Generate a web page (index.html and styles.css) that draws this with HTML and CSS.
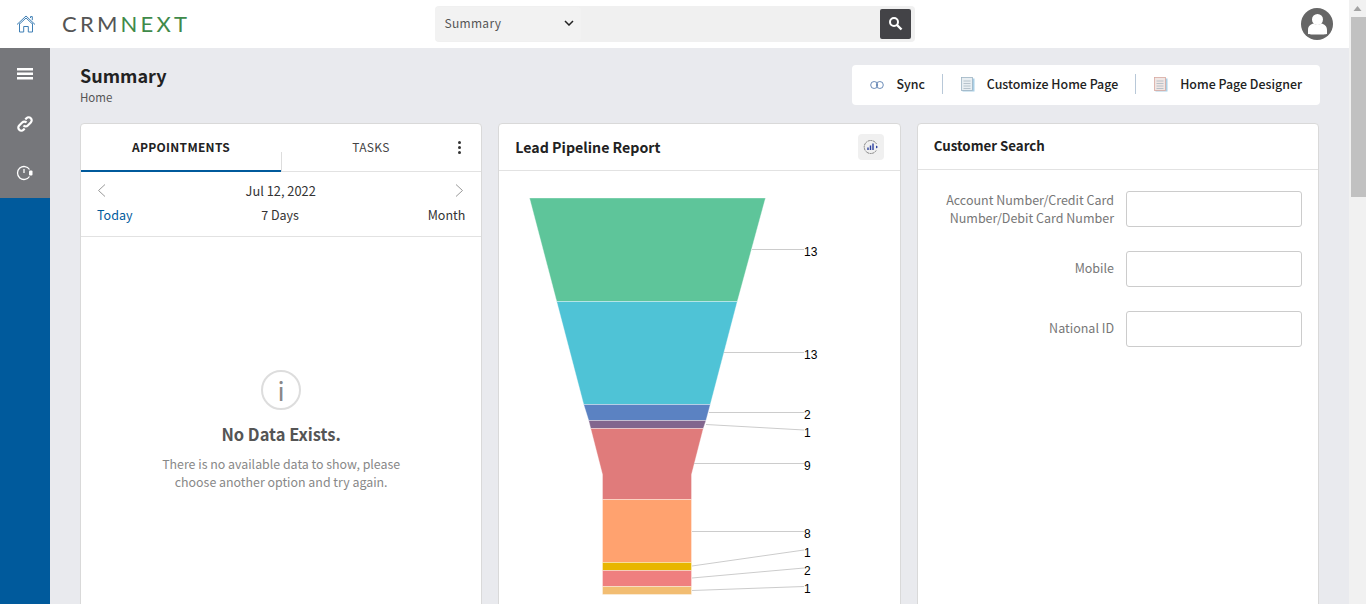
FILE: index.html
```html
<!DOCTYPE html>
<html lang="en">

<head>
    <meta charset="UTF-8">
    <meta name="viewport" content="width=device-width, initial-scale=1.0">
    <title>CRMNEXT Summary</title>
    <link rel="stylesheet" href="styles.css">
</head>

<body>
    <div class="page">
        <header class="topbar">
            <div class="brand">
                <svg class="home-icon" width="20" height="18" viewBox="0 0 20 18" fill="none" stroke="#3f7fb5" stroke-width="1">
                    <path d="M1 9.500 10 1l9 8.500" />
                    <path d="M3 9.500 10 3l7 6.500" />
                    <path d="M3.500 8.500V17h4.200v-5.500h4.600V17h4.200V8.500" />
                    <path d="M14.500 3V1.600h1.800v3.500" />
                </svg>
                <div class="logo"><span class="logo-crm">CRM</span><span class="logo-next">NEXT</span></div>
            </div>
            <div class="search">
                <div class="search-select">
                    <span>Summary</span>
                    <svg width="10" height="6" viewBox="0 0 10 6" fill="none" stroke="#222" stroke-width="1.5">
                        <path d="M1 1l4 4 4-4" />
                    </svg>
                </div>
                <button class="search-btn">
                    <svg width="15" height="15" viewBox="0 0 15 15" fill="none" stroke="#fff">
                        <circle cx="6" cy="6" r="4" stroke-width="2" />
                        <path d="M9 9l4.500 4.500" stroke-width="2.400" />
                    </svg>
                </button>
            </div>
            <div class="user">
                <svg width="32" height="32" viewBox="0 0 32 32">
                    <circle cx="16" cy="16" r="16" fill="#666" />
                    <circle cx="16.500" cy="11.500" r="5.500" fill="#fff" />
                    <path d="M7 26v-4c0-4 3-6 5.500-6.500 2.500 1.800 5.500 1.800 8 0C23 16 26 18 26 22v4c-1 .7-18 .7-19 0z" fill="#fff" />
                </svg>
            </div>
        </header>

        <div class="body-row">
            <nav class="sidebar">
                <div class="side-icons">
                    <a class="side-link">
                        <svg width="16" height="12" viewBox="0 0 16 12" fill="#fff">
                            <rect y="0" width="16" height="2.500" />
                            <rect y="4.500" width="16" height="2.500" />
                            <rect y="9" width="16" height="2.500" />
                        </svg>
                    </a>
                    <a class="side-link">
                        <svg width="18" height="18" viewBox="0 0 18 18" fill="none" stroke="#fff" stroke-width="2.200">
                            <path d="M7.500 10.500a3 3 0 0 0 4.300 0l3-3a3 3 0 0 0-4.300-4.300L9.300 4.400" />
                            <path d="M10.500 7.500a3 3 0 0 0-4.300 0l-3 3a3 3 0 0 0 4.300 4.300l1.200-1.200" />
                        </svg>
                    </a>
                    <a class="side-link side-link-last">
                        <svg width="18" height="16" viewBox="0 0 18 16" fill="none" stroke="#fff" stroke-width="1.300">
                            <path d="M13.500 4.500A6.500 6.500 0 1 0 13.500 11.500" />
                            <path d="M8 4v4" />
                            <rect x="13" y="5.500" width="3.500" height="5" rx="1" fill="#fff" stroke="none" />
                        </svg>
                    </a>
                </div>
                <div class="side-fill"></div>
            </nav>

            <main class="content">
                <div class="page-head">
                    <div>
                        <h1>Summary</h1>
                        <div class="crumb">Home</div>
                    </div>
                    <div class="actions">
                        <a class="action">
                            <svg width="14" height="8" viewBox="0 0 14 8" fill="none" stroke="#5b7fb0" stroke-width="0.900">
                                <circle cx="4.200" cy="4" r="3.500" />
                                <circle cx="9.800" cy="4" r="3.500" />
                            </svg>
                            <span>Sync</span>
                        </a>
                        <a class="action">
                            <svg width="14" height="15" viewBox="0 0 14 15">
                                <rect x="1.500" y="1.500" width="12" height="13" fill="#a9cfe6" />
                                <rect x="0.500" y="0.500" width="11" height="13" fill="#e8eef2" stroke="#9db4c4" stroke-width="0.800" />
                                <path d="M2.500 4h7M2.500 6.500h7M2.500 9h7M2.500 11.500h7" stroke="#a9b8c2" stroke-width="0.800" />
                            </svg>
                            <span>Customize Home Page</span>
                        </a>
                        <a class="action">
                            <svg width="14" height="15" viewBox="0 0 14 15">
                                <rect x="1.500" y="1.500" width="12" height="13" fill="#a9cfe6" />
                                <rect x="0.500" y="0.500" width="11" height="13" fill="#f0e6e4" stroke="#d8a8a0" stroke-width="0.800" />
                                <path d="M2.500 4h7M2.500 6.500h7M2.500 9h7M2.500 11.500h7" stroke="#a9b8c2" stroke-width="0.800" />
                            </svg>
                            <span>Home Page Designer</span>
                        </a>
                    </div>
                </div>

                <div class="cards">
                    <section class="card">
                        <div class="tabs">
                            <div class="tab tab-active">APPOINTMENTS</div>
                            <div class="tab tab-next">TASKS</div>
                            <div class="tab-more"><i></i><i></i><i></i></div>
                        </div>
                        <div class="cal">
                            <div class="cal-date">
                                <svg width="9" height="13" viewBox="0 0 9 13" fill="none" stroke="#999">
                                    <path d="M8 .5 1.500 6.500 8 12.500" />
                                </svg>
                                <span>Jul 12, 2022</span>
                                <svg width="9" height="13" viewBox="0 0 9 13" fill="none" stroke="#999">
                                    <path d="M1 .5 7.500 6.500 1 12.500" />
                                </svg>
                            </div>
                            <div class="cal-range">
                                <span class="range-on">Today</span>
                                <span>7 Days</span>
                                <span>Month</span>
                            </div>
                        </div>
                        <div class="empty">
                            <div class="empty-icon">i</div>
                            <h3>No Data Exists.</h3>
                            <p>There is no available data to show, please<br>choose another option and try again.</p>
                        </div>
                    </section>

                    <section class="card">
                        <div class="card-head card-head-tool">
                            <h2>Lead Pipeline Report</h2>
                            <button class="tool-btn">
                                <svg width="16" height="16" viewBox="0 0 16 16" fill="none">
                                    <path d="M13.500 5A6.500 6.500 0 1 0 13.500 11" stroke="#666" stroke-width="0.800" stroke-dasharray="2 .6" />
                                    <path d="M5 11V8.500M7.500 11V6.500M10 11V4.500" stroke="#2b3f9e" stroke-width="1.400" />
                                    <path d="M13 6.500 15 8l-2 1.500z" fill="#2b3f9e" />
                                </svg>
                            </button>
                        </div>
                        <svg class="funnel" width="401" height="436" viewBox="499 171 401 436">
                            <g stroke="#fff" stroke-opacity="0.35">
                                <polygon points="529.500,198 765.500,198 737.300,301.500 556.700,301.500" fill="#5ec59a" />
                                <polygon points="556.700,301.500 737.300,301.500 710.300,404.500 583.700,404.500" fill="#4fc3d6" />
                                <polygon points="583.700,404.500 710.300,404.500 706,420.500 588.700,420.500" fill="#5b82c2" />
                                <polygon points="588.700,420.500 706,420.500 703.300,428.500 590.700,428.500" fill="#82668e" />
                                <polygon points="590.700,428.500 703.300,428.500 691.500,474.500 691.500,499.500 602.500,499.500 602.500,474.500" fill="#e07b7b" />
                                <polygon points="602.500,499.500 691.500,499.500 691.500,562.500 602.500,562.500" fill="#ffa26f" />
                                <polygon points="602.500,562.500 691.500,562.500 691.500,570.500 602.500,570.500" fill="#e8b600" />
                                <polygon points="602.500,570.500 691.500,570.500 691.500,586.500 602.500,586.500" fill="#ef7f7f" />
                                <polygon points="602.500,586.500 691.500,586.500 691.500,594.500 602.500,594.500" fill="#f2bd72" />
                            </g>
                            <g stroke="#ccc" fill="none">
                                <path d="M752 249.500H804" />
                                <path d="M724 352.500H804" />
                                <path d="M709 412.500H804" />
                                <path d="M706 424.500 804 430" />
                                <path d="M694 463.500H804" />
                                <path d="M692 531.500H804" />
                                <path d="M692 566 804 550" />
                                <path d="M692 578 804 568" />
                                <path d="M692 590.500 804 586.500" />
                            </g>
                            <g class="funnel-num">
                                <text x="804" y="256">13</text>
                                <text x="804" y="359">13</text>
                                <text x="804" y="419">2</text>
                                <text x="804" y="437">1</text>
                                <text x="804" y="470">9</text>
                                <text x="804" y="538">8</text>
                                <text x="804" y="557">1</text>
                                <text x="804" y="575">2</text>
                                <text x="804" y="593">1</text>
                            </g>
                        </svg>
                    </section>

                    <section class="card">
                        <div class="card-head card-head-plain">
                            <h2>Customer Search</h2>
                        </div>
                        <form class="cust-form">
                            <label class="field">
                                <span>Account Number/Credit Card Number/Debit Card Number</span>
                                <input type="text">
                            </label>
                            <label class="field field-short">
                                <span>Mobile</span>
                                <input type="text">
                            </label>
                            <label class="field field-short">
                                <span>National ID</span>
                                <input type="text">
                            </label>
                        </form>
                    </section>
                </div>
            </main>
        </div>
    </div>

    <div class="scrollbar">
        <svg width="17" height="17" viewBox="0 0 17 17" fill="#a3a3a3">
            <path d="M8.500 6 12.500 11H4.500z" />
        </svg>
        <div class="scroll-thumb"></div>
    </div>
</body>

</html>
```

FILE: styles.css
```css
* {
    box-sizing: border-box;
}

html,
body {
    height: 100%;
    margin: 0;
    overflow: hidden;
}

body {
    display: flex;
    font-family: "Noto Sans CJK SC", "Noto Sans", sans-serif;
    font-size: 14px;
    color: #222;
    background: #e9eaee;
}

.page {
    flex: 1;
    min-width: 0;
    display: flex;
    flex-direction: column;
}

/* top bar */
.topbar {
    height: 48px;
    flex: none;
    background: #fff;
    display: grid;
    grid-template-columns: 1fr 480px 1fr;
    align-items: center;
}

.brand {
    display: flex;
    align-items: center;
    padding-left: 16px;
}

.logo {
    margin-left: 26px;
    font-family: "Lato", sans-serif;
    font-weight: 400;
    font-size: 22px;
    line-height: 26px;
    letter-spacing: 3.200px;
}

.logo-crm {
    color: #555;
}

.logo-next {
    color: #3f8a4a;
}

.search {
    height: 36px;
    margin-top: -1px;
    background: #f0f0f0;
    border-radius: 4px;
    display: flex;
    align-items: center;
    justify-content: space-between;
    padding-right: 4px;
}

.search-select {
    width: 146px;
    height: 34px;
    padding: 0 7px 2px 10px;
    background: #f2f2f2;
    border-radius: 4px;
    display: flex;
    align-items: center;
    justify-content: space-between;
    font-size: 12px;
    letter-spacing: 0.3px;
    color: #555;
}

.search-btn {
    width: 31px;
    height: 30px;
    padding: 0;
    border: none;
    border-radius: 2px;
    background: #434347;
    display: flex;
    align-items: center;
    justify-content: center;
}

.user {
    display: flex;
    justify-content: flex-end;
    padding-right: 16px;
}

.body-row {
    flex: 1;
    min-height: 0;
    display: flex;
}

/* left rail */
.sidebar {
    width: 50px;
    flex: none;
    display: flex;
    flex-direction: column;
}

.side-icons {
    height: 150px;
    background: #76777b;
    padding-top: 1px;
}

.side-link {
    height: 50px;
    display: flex;
    align-items: center;
    justify-content: center;
}

.side-link-last {
    padding-bottom: 2px;
}

.side-fill {
    flex: 1;
    background: #005a9c;
}

/* content */
.content {
    flex: 1;
    min-width: 0;
    padding: 15px 30px 0;
}

.page-head {
    display: flex;
    justify-content: space-between;
    align-items: flex-start;
    margin-right: -1px;
}

h1 {
    margin: 0;
    font-size: 18px;
    line-height: 24px;
    font-weight: 700;
    color: #222;
}

.crumb {
    font-size: 11.500px;
    line-height: 16px;
    margin-top: 2px;
    color: #555;
}

.actions {
    height: 40px;
    margin-top: 2px;
    display: flex;
    align-items: center;
    padding: 0 18px 3px;
    background: #fff;
    border-radius: 4px;
}

.action {
    display: flex;
    align-items: center;
    gap: 12px;
    font-size: 12.400px;
    font-weight: 500;
    color: #222;
}

.action + .action {
    margin-left: 17px;
    padding-left: 18px;
    border-left: 1px solid #b8c8d8;
    height: 20px;
}

.action svg {
    margin-top: 2px;
}

.cards {
    display: grid;
    grid-template-columns: repeat(3, minmax(0, 1fr));
    gap: 16px;
    margin-top: 18px;
}

.card {
    height: 660px;
    background: #fff;
    border: 1px solid #d9d9d9;
    border-radius: 4px;
}

.card-head {
    height: 46px;
    padding: 0 16px;
    display: flex;
    align-items: center;
    justify-content: space-between;
    border-bottom: 1px solid #e2e2e2;
}

.card-head-tool {
    height: 47px;
}

.card-head-plain {
    padding-bottom: 2px;
}

h2 {
    margin: 0;
    font-size: 14.200px;
    line-height: 20px;
    font-weight: 700;
    color: #222;
}

.card-head-plain h2 {
    font-size: 13.300px;
}

.tool-btn {
    width: 26px;
    height: 26px;
    padding: 0;
    border: none;
    border-radius: 4px;
    background: #f0f0f0;
    display: flex;
    align-items: center;
    justify-content: center;
}

/* appointments card */
.tabs {
    height: 48px;
    display: flex;
    border-bottom: 1px solid #e2e2e2;
}

.tab {
    width: 200px;
    height: 48px;
    font-size: 12px;
    line-height: 46px;
    text-align: center;
    letter-spacing: 0.3px;
    color: #444;
}

.tab-active {
    font-weight: 700;
    color: #222;
    border-bottom: 2px solid #005a9c;
}

.tab-next {
    width: 180px;
    background: linear-gradient(#ddd, #ddd) left bottom / 1px 20px no-repeat;
}

.tab-more {
    width: 20px;
    margin-left: -12px;
    display: flex;
    flex-direction: column;
    align-items: center;
    justify-content: center;
    gap: 2px;
    padding-bottom: 1px;
}

.tab-more i {
    width: 3px;
    height: 3px;
    border-radius: 50%;
    background: #333;
}

.cal {
    height: 65px;
    padding: 8px 16px 0;
    border-bottom: 1px solid #e2e2e2;
}

.cal-date {
    height: 20px;
    display: flex;
    align-items: center;
    justify-content: space-between;
    font-size: 12.800px;
    color: #333;
    padding-right: 1px;
}

.cal-range {
    height: 20px;
    margin-top: 4px;
    display: flex;
    align-items: center;
    justify-content: space-between;
    font-size: 12.500px;
    color: #333;
}

.range-on {
    color: #005a9c;
}

.empty {
    padding-top: 133px;
    display: flex;
    flex-direction: column;
    align-items: center;
    text-align: center;
}

.empty-icon {
    width: 40px;
    height: 40px;
    border: 2px solid #ddd;
    border-radius: 50%;
    font-size: 26px;
    line-height: 35px;
    color: #888;
}

.empty h3 {
    margin: 12px 0 0;
    font-size: 16.500px;
    line-height: 24px;
    font-weight: 700;
    color: #555;
}

.empty p {
    margin: 9px 0 0;
    font-size: 12.400px;
    line-height: 18px;
    color: #888;
}

/* funnel */
.funnel {
    display: block;
}

.funnel-num text {
    font-family: "Liberation Sans", sans-serif;
    font-size: 12px;
    fill: #000;
}

/* search form */
.cust-form {
    padding: 21px 16px 0;
    display: flex;
    flex-direction: column;
    gap: 24px;
}

.field {
    display: grid;
    grid-template-columns: 1fr 176px;
    column-gap: 12px;
    align-items: center;
    font-size: 12.500px;
    line-height: 18px;
    text-align: right;
    color: #777;
}

.field-short span {
    padding-bottom: 2px;
}

.field input {
    height: 36px;
    width: 100%;
    border: 1px solid #ccc;
    border-radius: 3px;
    background: #fff;
}

/* scrollbar */
.scrollbar {
    width: 17px;
    flex: none;
    background: #f1f1f1;
    display: flex;
    flex-direction: column;
}

.scroll-thumb {
    height: 180px;
    margin-left: 2px;
    background: #c1c1c1;
}
```
